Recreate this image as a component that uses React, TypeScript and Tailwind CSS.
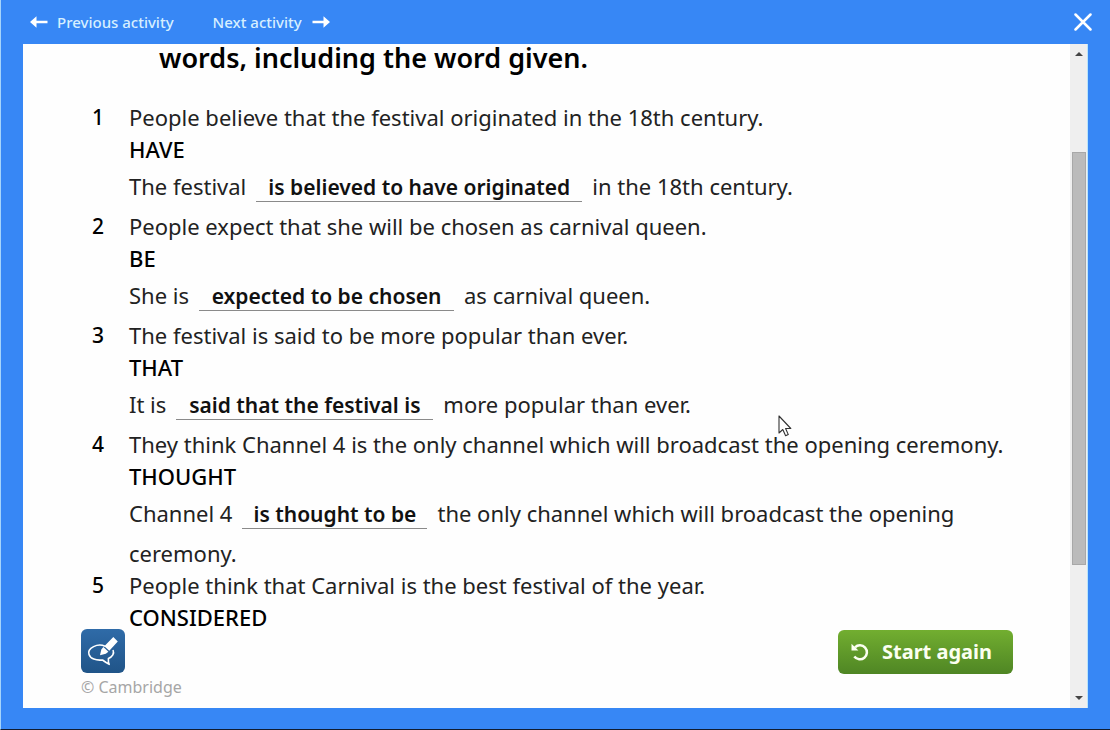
import React from "react";

type Item = {
  prompt: string;
  keyword: string;
  before?: string;
  answer?: string;
  width?: string;
  after?: string;
};

const items: Item[] = [
  {
    prompt: "People believe that the festival originated in the 18th century.",
    keyword: "HAVE",
    before: "The festival",
    answer: "is believed to have originated",
    width: "w-[326px]",
    after: "in the 18th century.",
  },
  {
    prompt: "People expect that she will be chosen as carnival queen.",
    keyword: "BE",
    before: "She is",
    answer: "expected to be chosen",
    width: "w-[255px]",
    after: "as carnival queen.",
  },
  {
    prompt: "The festival is said to be more popular than ever.",
    keyword: "THAT",
    before: "It is",
    answer: "said that the festival is",
    width: "w-[257px]",
    after: "more popular than ever.",
  },
  {
    prompt: "They think Channel 4 is the only channel which will broadcast the opening ceremony.",
    keyword: "THOUGHT",
    before: "Channel 4",
    answer: "is thought to be",
    width: "w-[185px]",
    after: "the only channel which will broadcast the opening ceremony.",
  },
  {
    prompt: "People think that Carnival is the best festival of the year.",
    keyword: "CONSIDERED",
  },
];

function Arrow({ flip = false }: { flip?: boolean }) {
  return (
    <svg viewBox="0 0 18 12" className={flip ? "h-3 w-[18px] rotate-180 text-white" : "h-3 w-[18px] text-white"} aria-hidden="true">
      <path d="M0 6 6.5 0.2V4.8H17.5V7.2H6.5V11.8Z" fill="currentColor" />
    </svg>
  );
}

function Question({ item, index }: { item: Item; index: number }) {
  return (
    <li className="flex">
      <span className="w-[37px] shrink-0 text-[21px] font-medium text-black">{index + 1}</span>
      <div className="min-w-0 flex-1">
        <p>{item.prompt}</p>
        <p className="font-medium text-black">{item.keyword}</p>
        {item.answer && (
          <p>
            {item.before}
            <span className="mx-[10px] inline-flex h-[45px] items-center">
              <input
                type="text"
                defaultValue={item.answer}
                aria-label={`Answer ${index + 1}`}
                className={`${item.width} h-[29px] border-b border-[#8a8a8a] bg-transparent text-center text-[21px] font-semibold text-[#111] outline-none`}
              />
            </span>
            {item.after}
          </p>
        )}
      </div>
    </li>
  );
}

export default function App() {
  return (
    <div className="flex min-h-screen flex-col border-b border-l border-b-[#101c30] border-l-[#a5d4fb] bg-[#3787f5] pr-[22px] pb-[21px] pl-[22px] font-['Noto_Sans',sans-serif] text-black">
      <header className="flex h-11 shrink-0 items-center justify-between pl-[7px] text-[15px] font-medium text-[#d6efff]">
        <nav className="flex gap-[39px]">
          <a href="#previous" className="flex items-center gap-[9px]">
            <Arrow />
            Previous activity
          </a>
          <a href="#next" className="flex items-center gap-[10px]">
            Next activity
            <Arrow flip />
          </a>
        </nav>
        <button type="button" aria-label="Close" className="-mr-1 text-white">
          <svg viewBox="0 0 18 18" className="h-[18px] w-[18px]" aria-hidden="true">
            <path d="M1.5 1.5 16.5 16.5M16.5 1.5 1.5 16.5" stroke="currentColor" strokeWidth="2.5" strokeLinecap="round" />
          </svg>
        </button>
      </header>

      <main className="flex flex-1 bg-[#fefefe]">
        <div className="flex min-w-0 flex-1 flex-col pr-[57px] pl-[58px]">
          <section className="flex-1 pl-[11px]">
            <h1 className="pl-[67px] text-[27px] leading-7 font-semibold">words, including the word given.</h1>
            <ol className="pt-[29px] text-[22px] leading-8 text-[#222]">
              {items.map((item, i) => (
                <Question key={item.keyword} item={item} index={i} />
              ))}
            </ol>
          </section>
          <footer className="-mt-1 flex shrink-0 items-start justify-between pb-[11px]">
            <div>
              <button
                type="button"
                aria-label="Annotate"
                className="flex h-11 w-11 items-center justify-center rounded-md bg-linear-to-b from-[#2f6ba8] to-[#205488] text-white"
              >
                <svg viewBox="0 0 44 44" className="h-11 w-11" fill="none" aria-hidden="true">
                  <path
                    d="M24 17.2C21 15.8 16 15.9 12.6 17.6 8.600 19.600 7 22.500 8 25.500 9.300 29.600 15 31.800 21.500 31 23.500 32.500 25.500 34 28.200 35.300 27.300 33.400 27.200 31.500 27.400 29.600 31.500 27.800 33.600 24.500 32 21"
                    stroke="currentColor"
                    strokeWidth="1.6"
                    strokeLinejoin="round"
                  />
                  <path d="M32.300 8 36.800 12.500 28.300 21.800 23.300 17.200ZM22.400 18 27.400 22.800 24.800 24.800 19 26.200 20.300 20.600Z" fill="currentColor" />
                </svg>
              </button>
              <p className="mt-1 text-base leading-5 text-[#a6a6a6]">© Cambridge</p>
            </div>
            <button
              type="button"
              className="mt-px flex h-11 w-[175px] items-center gap-[13px] rounded-md bg-linear-to-b from-[#72ae30] to-[#4f8624] pl-[13px] text-xl font-bold text-[#fbfff0]"
            >
              <svg viewBox="0 0 18 18" className="h-[18px] w-[18px]" fill="none" aria-hidden="true">
                <path d="M4 4.300A7 7 0 1 1 3.300 13.500" stroke="currentColor" strokeWidth="2.500" />
                <path d="M0.500 0.800V7.400H7.400L5.200 5.200 3.800 3.900Z" fill="currentColor" />
              </svg>
              Start again
            </button>
          </footer>
        </div>

        <div className="flex w-[18px] shrink-0 flex-col items-center border-r border-[#b9e4fb] bg-[#efefef]">
          <button type="button" aria-label="Scroll up" className="flex h-5 w-full items-center justify-center">
            <svg viewBox="0 0 8 4" className="h-1 w-2" aria-hidden="true">
              <path d="M0 4 4 0 8 4Z" fill="#444" />
            </svg>
          </button>
          <div className="flex w-[14px] flex-1 flex-col">
            <div className="grow-[88]" />
            <div className="grow-[413] border border-[#a8a8a8] bg-[#bbbbbb]" />
            <div className="grow-[123]" />
          </div>
          <button type="button" aria-label="Scroll down" className="flex h-5 w-full items-center justify-center">
            <svg viewBox="0 0 8 4" className="h-1 w-2" aria-hidden="true">
              <path d="M0 0 4 4 8 0Z" fill="#444" />
            </svg>
          </button>
        </div>
      </main>

      <svg viewBox="0 0 14 22" className="pointer-events-none absolute top-[415px] left-[778px] h-[22px] w-[14px]" aria-hidden="true">
        <path d="M1 1V18L4.800 14.500 7.600 20.800 10.300 19.600 7.600 13.500H12.800Z" fill="#fff" stroke="#333" strokeWidth="1.100" strokeLinejoin="round" />
      </svg>
    </div>
  );
}
